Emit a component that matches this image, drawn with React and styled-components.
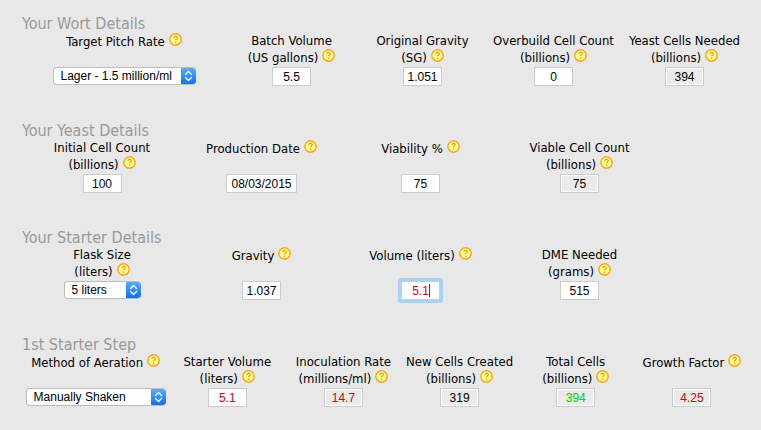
import React from 'react';
import styled, { createGlobalStyle, css } from 'styled-components';

const GlobalStyle = createGlobalStyle`
  *, *::before, *::after { box-sizing: border-box; }
  body {
    margin: 0;
    background: #e8e8e8;
    color: #000;
    font-family: "DejaVu Sans Condensed", "DejaVu Sans", sans-serif;
    font-size: 13px;
  }
`;

const Calculator = styled.form`
  display: flex;
  flex-direction: column;
  gap: 36px;
  padding: 15px 11px 22px 22px;
`;

const Section = styled.section`
  display: flex;
  flex-direction: column;
`;

const Heading = styled.h2`
  margin: 0;
  font-size: 16px;
  font-weight: 400;
  line-height: 18px;
  color: #999;
`;

const Fields = styled.div`
  display: grid;
  grid-template-columns: ${(p) => p.$columns};
`;

const Field = styled.div`
  display: flex;
  flex-direction: column;
  align-items: center;
`;

const Label = styled.label`
  height: 34px;
  text-align: center;
  white-space: nowrap;
`;

const Line = styled.span`
  display: block;
  line-height: 16px;
`;

const HelpIcon = styled.svg`
  width: 13px;
  height: 13px;
  margin-left: 4px;
  vertical-align: baseline;
`;

const controlText = css`
  font-family: "Liberation Sans", Arial, sans-serif;
  font-size: 12px;
  color: ${(p) => p.$color || '#000'};
`;

const TextInput = styled.input`
  ${controlText}
  display: block;
  width: ${(p) => (p.$wide ? 71 : 39)}px;
  height: 19px;
  margin: 0;
  padding: 0;
  border: 1px solid #ccc;
  border-radius: 0;
  outline: none;
  background: #fff;
  text-align: center;

  &:read-only {
    background: #ebebeb;
    box-shadow: inset 0 0 0 1px #fff;
  }
`;

const ActiveBox = styled.div`
  position: relative;
  border-radius: 1px;
  box-shadow: 0 0 0 3px #a9d2f5;

  &::after {
    content: '';
    position: absolute;
    top: 3px;
    left: 28px;
    width: 1px;
    height: 13px;
    background: #d2000f;
  }
`;

const SelectBox = styled.div`
  display: flex;
  width: ${(p) => p.$width}px;
  height: 18px;
  position: relative;
  border-radius: 4px;
  overflow: hidden;
  background: #fff;
  border: 1px solid #bdbdbd;
  border-right: 0;
`;

const Select = styled.select`
  ${controlText}
  appearance: none;
  width: 100%;
  margin: 0;
  padding: 0 16px 0 7px;
  border: 0;
  outline: none;
  background: transparent;
`;

const Stepper = styled.svg`
  position: absolute;
  top: -1px;
  right: 0;
  width: 15px;
  height: 18px;
  pointer-events: none;
  background: linear-gradient(#5cb0fb, #0a6cfb);
`;

function Help() {
  return (
    <HelpIcon viewBox="0 0 13 13" role="img" aria-label="Help">
      <circle cx="6.5" cy="6.5" r="5.7" fill="#ffff8c" stroke="#ffa01e" strokeWidth="1.4" />
      <path
        d="M4.8 4.9c.1-1 .7-1.5 1.7-1.5s1.8.5 1.8 1.4c0 1.2-1.7 1.2-1.7 2.5M6.6 8.6v1.3"
        fill="none"
        stroke="#f59a1c"
        strokeWidth="1.2"
      />
    </HelpIcon>
  );
}

function Control({ id, field }) {
  if (field.select) {
    return (
      <SelectBox $width={field.width}>
        <Select id={id} defaultValue={field.value}>
          <option>{field.value}</option>
        </Select>
        <Stepper viewBox="0 0 15 18" aria-hidden="true">
          <path
            d="M4.5 7.5l3-3 3 3M4.5 10.5l3 3 3-3"
            fill="none"
            stroke="#fff"
            strokeWidth="1.4"
            strokeLinecap="round"
            strokeLinejoin="round"
          />
        </Stepper>
      </SelectBox>
    );
  }
  const input = (
    <TextInput
      id={id}
      type="text"
      defaultValue={field.value}
      readOnly={field.readOnly}
      $wide={field.wide}
      $color={field.color}
    />
  );
  return field.active ? <ActiveBox>{input}</ActiveBox> : input;
}

const RED = '#d2000f';
const GREEN = '#00d200';

const sections = [
  {
    title: 'Your Wort Details',
    columns: '204fr repeat(4, 131fr)',
    fields: [
      { label: ['Target Pitch Rate'], value: 'Lager - 1.5 million/ml', select: true, width: 143 },
      { label: ['Batch Volume', '(US gallons)'], value: '5.5' },
      { label: ['Original Gravity', '(SG)'], value: '1.051' },
      { label: ['Overbuild Cell Count', '(billions)'], value: '0' },
      { label: ['Yeast Cells Needed', '(billions)'], value: '394', readOnly: true },
    ],
  },
  {
    title: 'Your Yeast Details',
    columns: '160fr repeat(3, 159fr) 91fr',
    fields: [
      { label: ['Initial Cell Count', '(billions)'], value: '100' },
      { label: ['Production Date'], value: '08/03/2015', wide: true },
      { label: ['Viability %'], value: '75' },
      { label: ['Viable Cell Count', '(billions)'], value: '75', readOnly: true },
    ],
  },
  {
    title: 'Your Starter Details',
    columns: '160fr repeat(3, 159fr) 91fr',
    fields: [
      { label: ['Flask Size', '(liters)'], value: '5 liters', select: true, width: 77 },
      { label: ['Gravity'], value: '1.037' },
      { label: ['Volume (liters)'], value: '5.1', color: RED, active: true },
      { label: ['DME Needed', '(grams)'], value: '515' },
    ],
  },
  {
    title: '1st Starter Step',
    columns: '147fr repeat(5, 116fr)',
    fields: [
      { label: ['Method of Aeration'], value: 'Manually Shaken', select: true, width: 140 },
      { label: ['Starter Volume', '(liters)'], value: '5.1', color: RED },
      { label: ['Inoculation Rate', '(millions/ml)'], value: '14.7', color: RED, readOnly: true },
      { label: ['New Cells Created', '(billions)'], value: '319', readOnly: true },
      { label: ['Total Cells', '(billions)'], value: '394', color: GREEN, readOnly: true },
      { label: ['Growth Factor'], value: '4.25', color: RED, readOnly: true },
    ],
  },
];

export default function App() {
  return (
    <>
      <GlobalStyle />
      <Calculator>
        {sections.map((section, s) => (
          <Section key={section.title}>
            <Heading>{section.title}</Heading>
            <Fields $columns={section.columns}>
              {section.fields.map((field, f) => {
                const id = `field-${s}-${f}`;
                const lines = field.label;
                return (
                  <Field key={id}>
                    <Label htmlFor={id}>
                      {lines.length > 1 && <Line>{lines[0]}</Line>}
                      <Line>
                        {lines[lines.length - 1]}
                        <Help />
                      </Line>
                    </Label>
                    <Control id={id} field={field} />
                  </Field>
                );
              })}
            </Fields>
          </Section>
        ))}
      </Calculator>
    </>
  );
}
